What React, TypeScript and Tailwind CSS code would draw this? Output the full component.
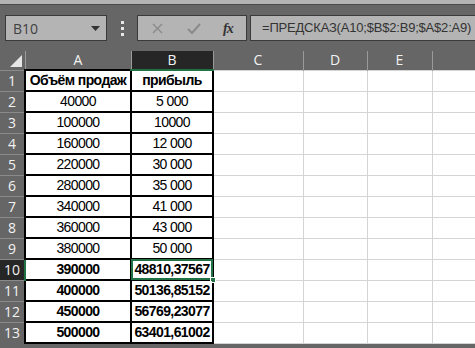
import { useState } from 'react';

/** строки таблицы: объём продаж → прибыль */
const rows: Array<{ a: string; b: string; bold?: boolean }> = [
  { a: 'Объём продаж', b: 'прибыль', bold: true },
  { a: '40000', b: '5 000' },
  { a: '100000', b: '10000' },
  { a: '160000', b: '12 000' },
  { a: '220000', b: '30 000' },
  { a: '280000', b: '35 000' },
  { a: '340000', b: '41 000' },
  { a: '360000', b: '43 000' },
  { a: '380000', b: '50 000' },
  { a: '390000', b: '48810,37567', bold: true },
  { a: '400000', b: '50136,85152', bold: true },
  { a: '450000', b: '56769,23077', bold: true },
  { a: '500000', b: '63401,61002', bold: true },
];

const cols = ['A', 'B', 'C', 'D', 'E', ''];

export default function App() {
  const [selected] = useState({ col: 'B', row: 10 });

  return (
    <div
      className="w-[475px] h-[348px] overflow-hidden bg-[#666666]"
      style={{ fontFamily: '"Liberation Sans", Arial, sans-serif' }}
    >
      {/* Top strip */}
      <div className="h-[4px] bg-[#b3b3b3]" />
      <div className="h-[1px] bg-[#4a4a4a]" />

      {/* Formula bar */}
      <div className="flex items-center h-[46px] pt-[10px] pb-[10px] pl-[5px]">
        <div className="flex items-center justify-between w-[102px] h-[26px] bg-[#b4b4b4] border border-[#3a3a3a] pl-[7px] pr-[6px]">
          <span className="text-[14px] text-[#404040]" style={{ fontFamily: '"Open Sans", sans-serif' }}>
            B10
          </span>
          <svg width="9" height="5" viewBox="0 0 9 5">
            <path d="M0 0H9L4.5 5Z" fill="#333" />
          </svg>
        </div>
        <div className="flex flex-col items-center justify-center w-[30px] gap-[3px]">
          <span className="w-[3px] h-[3px] bg-[#e8e8e8]" />
          <span className="w-[3px] h-[3px] bg-[#e8e8e8]" />
          <span className="w-[3px] h-[3px] bg-[#e8e8e8]" />
        </div>
        <div className="flex items-center w-[110px] h-[26px] bg-[#b4b4b4] border border-[#3a3a3a]">
          <svg className="ml-[14px]" width="11" height="11" viewBox="0 0 11 11">
            <path d="M1 1L10 10M10 1L1 10" stroke="#8a8a8a" strokeWidth="1.4" />
          </svg>
          <svg className="ml-[24px]" width="14" height="11" viewBox="0 0 14 11">
            <path d="M1 6L5 10L13 1" stroke="#8a8a8a" strokeWidth="2" fill="none" />
          </svg>
          <span
            className="ml-[22px] text-[14px] italic font-bold text-[#333] tracking-[-1px]"
            style={{ fontFamily: '"Liberation Serif", serif' }}
          >
            fx
          </span>
        </div>
        <div className="ml-[3px] flex items-center flex-1 h-[26px] bg-[#b4b4b4] border border-[#3a3a3a] border-r-0 pl-[11px] overflow-hidden whitespace-nowrap">
          <span className="text-[13px] tracking-[-0.2px] text-[#333]">
            =ПРЕДСКАЗ(A10;$B$2:B9;$A$2:A9)
          </span>
        </div>
      </div>

      {/* Grid */}
      <table className="table-fixed border-collapse" style={{ width: 520 }}>
        <colgroup>
          <col style={{ width: 25 }} />
          <col style={{ width: 106 }} />
          <col style={{ width: 82 }} />
          <col style={{ width: 90 }} />
          <col style={{ width: 64 }} />
          <col style={{ width: 65 }} />
          <col style={{ width: 88 }} />
        </colgroup>
        <thead>
          <tr className="h-[19px]">
            <th className="relative p-0 border-r border-[#9a9a9a]">
              <svg className="absolute right-[3px] bottom-[3px]" width="12" height="12" viewBox="0 0 12 12">
                <path d="M12 0V12H0Z" fill="#e6e6e6" />
              </svg>
            </th>
            {cols.map((c) => (
              <th
                key={c || 'F'}
                className={
                  c === selected.col
                    ? 'p-0 h-[19px] leading-[16px] bg-[#262626] border-b-2 border-b-[#217346] border-r border-r-[#9a9a9a] text-[14px] font-normal text-[#f2f2f2]'
                    : 'p-0 h-[19px] leading-[16px] border-r border-[#9a9a9a] text-[14px] font-normal text-[#f2f2f2]'
                }
                style={{ fontFamily: '"Open Sans", sans-serif' }}
              >
                {c}
              </th>
            ))}
          </tr>
        </thead>
        <tbody>
          {rows.map((r, i) => {
            const n = i + 1;
            const isSel = n === selected.row;
            return (
              <tr key={n} className="h-[21px] leading-[15px]">
                <td
                  className={
                    isSel
                      ? 'p-0 h-[21px] bg-[#262626] border-r-2 border-r-[#217346] border-t border-t-[#8a8a8a] text-center text-[14px] text-[#f2f2f2]'
                      : 'p-0 h-[21px] bg-[#666666] border-t border-t-[#8a8a8a] text-center text-[14px] text-[#f2f2f2]'
                  }
                  style={{ fontFamily: '"Open Sans", sans-serif' }}
                >
                  {n}
                </td>
                <td
                  className={`p-0 h-[21px] bg-white border-2 border-black text-center text-[14px] tracking-[-0.6px] text-black whitespace-nowrap ${r.bold ? 'font-bold' : ''}`}
                >
                  {r.a}
                </td>
                <td
                  className={`relative p-0 h-[21px] bg-white border-2 border-black text-center text-[14px] tracking-[-0.6px] text-black whitespace-nowrap ${r.bold ? 'font-bold' : ''}`}
                >
                  {r.b}
                  {isSel && (
                    <>
                      <span className="absolute -inset-[1px] border-2 border-[#217346]" />
                      <span className="absolute right-[-4px] bottom-[-4px] w-[6px] h-[6px] bg-[#217346] border border-white" />
                    </>
                  )}
                </td>
                <td className="p-0 h-[21px] bg-white border border-[#d4d4d4]" />
                <td className="p-0 h-[21px] bg-white border border-[#d4d4d4]" />
                <td className="p-0 h-[21px] bg-white border border-[#d4d4d4]" />
                <td className="p-0 h-[21px] bg-white border border-[#d4d4d4]" />
              </tr>
            );
          })}
        </tbody>
      </table>
    </div>
  );
}
